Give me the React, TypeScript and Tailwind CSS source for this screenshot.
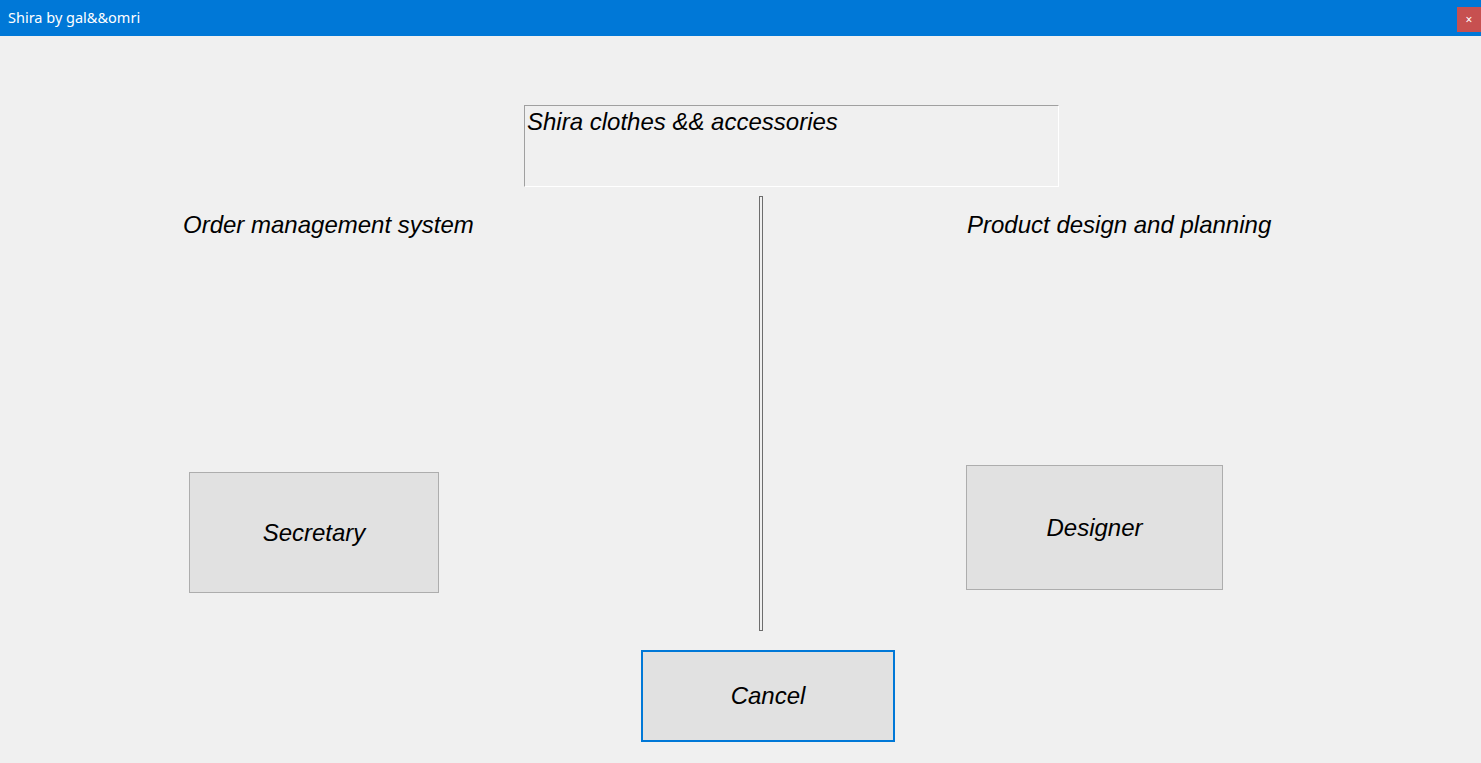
export default function App() {
  const italic = { fontFamily: '"Liberation Sans", Arial, sans-serif' }

  return (
    <div className="w-[1481px] h-[763px] bg-[#f0f0f0] overflow-hidden flex flex-col">
      <div className="h-[36px] bg-[#0078d7] flex items-start justify-between shrink-0">
        <span
          className="text-white text-[14.5px] pl-[8px] pt-[9px] leading-[17px]"
          style={{ fontFamily: '"Noto Sans", "Open Sans", sans-serif' }}
        >
          Shira by gal&amp;&amp;omri
        </span>
        <div className="mt-[7px] w-[24px] h-[25px] bg-[#c75050] flex items-center justify-center text-white text-[12px] leading-none">
          ×
        </div>
      </div>

      <div className="italic text-black" style={italic}>
        <div className="ml-[524px] mt-[69px] w-[535px] h-[82px] border-t border-l border-[#a0a0a0] border-r-white border-b-white border-r border-b pl-[2px] pt-[2px]">
          <span className="text-[24px] leading-[27px]">Shira clothes &amp;&amp; accessories</span>
        </div>

        <div className="flex items-start mt-[9px]">
          <div className="w-[759px] pl-[183px] shrink-0">
            <div className="text-[24px] leading-[27px] mt-[15px]">Order management system</div>
            <button className="mt-[234px] ml-[6px] w-[250px] h-[121px] bg-[#e1e1e1] border border-[#adadad] text-[24px] italic">
              Secretary
            </button>
          </div>
          <div className="w-[4px] h-[435px] border border-[#6d6d6d] bg-[#f0f0f0] shrink-0" />
          <div className="pl-[203px]">
            <div className="text-[24px] leading-[27px] mt-[15px] pl-[1px]">Product design and planning</div>
            <button className="mt-[227px] w-[257px] h-[125px] bg-[#e1e1e1] border border-[#adadad] text-[24px] italic">
              Designer
            </button>
          </div>
        </div>

        <button className="mt-[19px] ml-[641px] w-[254px] h-[92px] bg-[#e1e1e1] border-2 border-[#0078d7] text-[24px] italic">
          Cancel
        </button>
      </div>
    </div>
  )
}
